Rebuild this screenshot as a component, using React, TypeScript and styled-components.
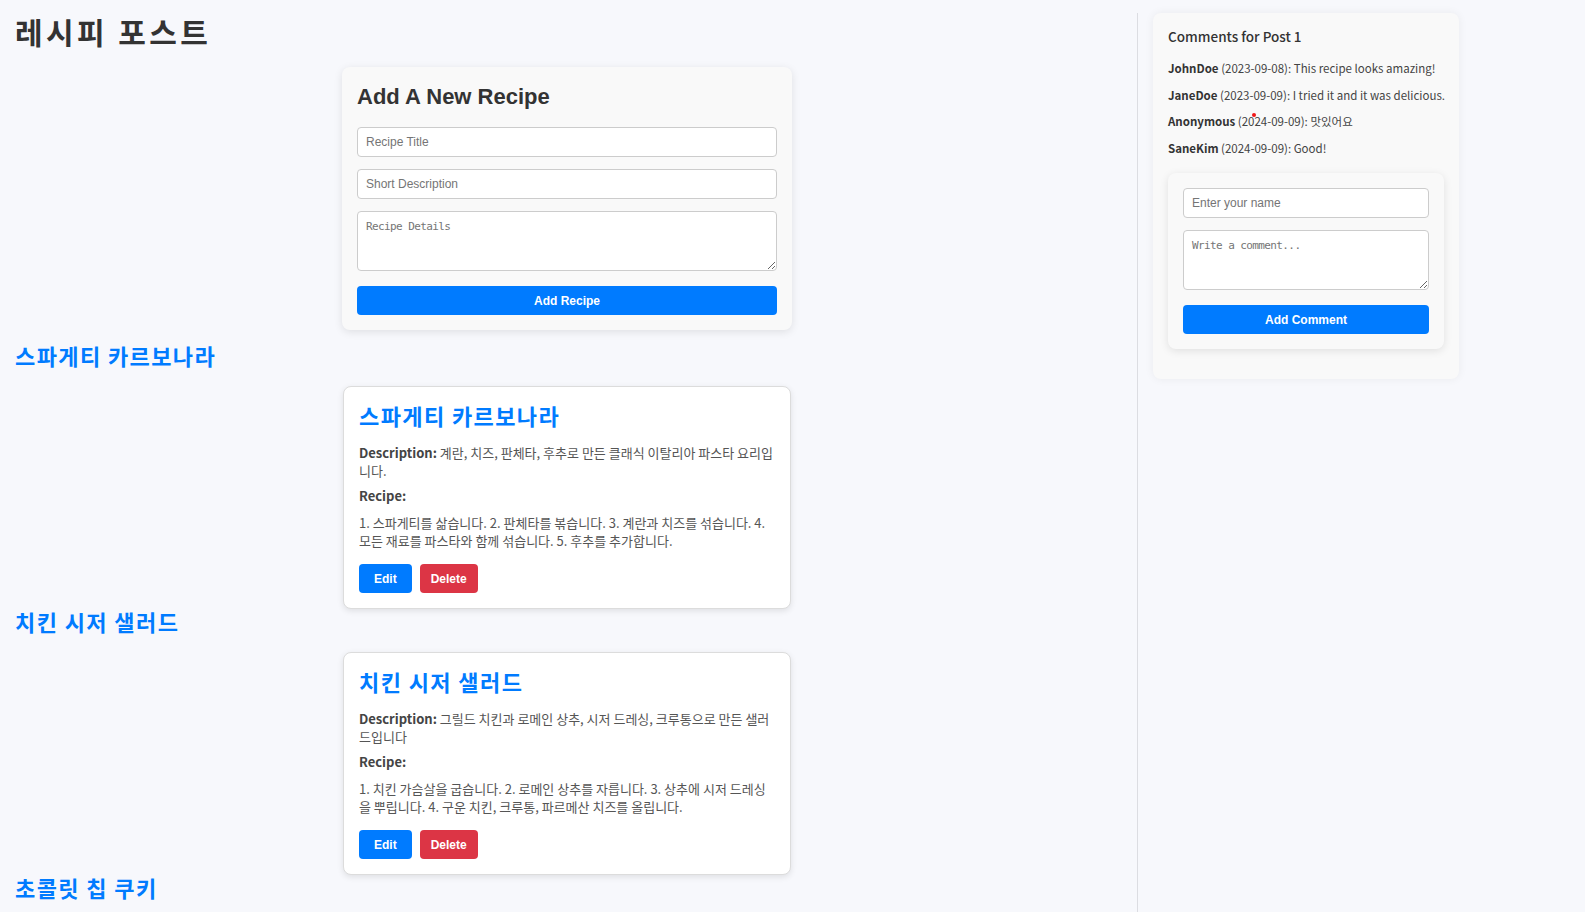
import React from "react";
import styled, { createGlobalStyle } from "styled-components";

const GlobalStyle = createGlobalStyle`
  html, body {
    margin: 0;
    padding: 0;
    background: #f7f8fc;
    font-family: "Noto Sans CJK KR", "Noto Sans", sans-serif;
    color: #333;
  }
  * { box-sizing: border-box; }
`;

const Page = styled.div`
  display: flex;
  align-items: stretch;
  min-height: 100vh;
  padding: 13px 0 0 15px;
`;

const Main = styled.main`
  flex: 1;
  min-width: 0;
  margin-right: 18px;
`;

const Sidebar = styled.aside`
  width: 448px;
  flex: none;
  border-left: 1px solid #dcdde2;
  padding-left: 15px;
`;

const PageTitle = styled.h1`
  margin: 0 0 18px;
  font-family: "Noto Sans CJK KR", sans-serif;
  font-size: 30px;
  line-height: 36px;
  letter-spacing: 3.4px;
  font-weight: 700;
  color: #333;
`;

const FormCard = styled.section`
  width: 450px;
  margin: 0 auto 13px;
  padding: 15px;
  background: #f9f9f9;
  border-radius: 8px;
  box-shadow: 0 2px 8px rgba(0, 0, 0, 0.1);
`;

const FormTitle = styled.h2`
  margin: 2px 0 18px;
  font-family: "Liberation Sans", Arial, sans-serif;
  font-size: 22px;
  line-height: 25px;
  font-weight: 700;
  color: #333;
`;

const Form = styled.div`
  display: flex;
  flex-direction: column;
  gap: 12px;
`;

const TextInput = styled.input`
  display: block;
  width: 100%;
  height: 30px;
  padding: 0 8px;
  border: 1px solid #ccc;
  border-radius: 4px;
  background: #fff;
  font-family: "Liberation Sans", Arial, sans-serif;
  font-size: 12px;
  color: #333;
  &::placeholder { color: #757575; }
`;

const TextArea = styled.textarea`
  display: block;
  width: 100%;
  height: 60px;
  padding: 8px;
  border: 1px solid #ccc;
  border-radius: 4px;
  background: #fff;
  font-family: "DejaVu Sans Mono", monospace;
  font-size: 11px;
  letter-spacing: -0.6px;
  color: #333;
  &::placeholder { color: #757575; }
`;

const Button = styled.button<{ $variant?: "primary" | "danger"; $full?: boolean; $px?: number }>`
  display: inline-flex;
  align-items: center;
  justify-content: center;
  height: 29px;
  width: ${(p) => (p.$full ? "100%" : "auto")};
  padding: 0 ${(p) => p.$px ?? 12}px;
  border: none;
  border-radius: 4px;
  background: ${(p) => (p.$variant === "danger" ? "#dc3545" : "#007bff")};
  color: #fff;
  font-family: "Liberation Sans", Arial, sans-serif;
  font-size: 12px;
  font-weight: 700;
  cursor: pointer;
`;

const SubmitButton = styled(Button)`
  margin-top: 3px;
`;

const RecipeLink = styled.h2`
  margin: 0;
  font-family: "Noto Sans CJK KR", sans-serif;
  font-size: 22px;
  line-height: 24px;
  letter-spacing: 1.4px;
  font-weight: 700;
  color: #007bff;
`;

const RecipeCard = styled.article`
  width: 448px;
  margin: 19px auto 0;
  padding: 15px;
  background: #fff;
  border: 1px solid #dcdcdc;
  border-radius: 8px;
  box-shadow: 0 2px 6px rgba(0, 0, 0, 0.1);
`;

const CardTitle = styled(RecipeLink)`
  margin: 1px 0 17px;
`;

const CardText = styled.p<{ $mb: number }>`
  margin: 0 0 ${(p) => p.$mb}px;
  font-size: 13px;
  line-height: 18px;
  color: #555;
  strong { color: #444; font-weight: 700; }
`;

const ButtonRow = styled.div`
  display: flex;
  gap: 8px;
`;

const CommentsCard = styled.section`
  width: 306px;
  padding: 15px;
  background: #f9f9f9;
  border-radius: 8px;
  box-shadow: 0 0 10px rgba(0, 0, 0, 0.06);
`;

const CommentsTitle = styled.h3`
  margin: 0 0 14px;
  font-size: 13.5px;
  line-height: 17px;
  font-weight: 500;
  color: #333;
`;

const CommentList = styled.div`
  display: flex;
  flex-direction: column;
  gap: 8.5px;
`;

const Comment = styled.p`
  position: relative;
  margin: 0;
  font-size: 11.5px;
  line-height: 18px;
  color: #444;
  white-space: nowrap;
  strong { color: #333; font-weight: 700; }
`;

const CursorDot = styled.span`
  position: absolute;
  left: 84px;
  top: 1px;
  width: 4px;
  height: 4px;
  border-radius: 50%;
  background: #f01818;
`;

const CommentFormCard = styled.div`
  margin: 16.5px 0 15px;
  padding: 15px;
  background: #f9f9f9;
  border-radius: 8px;
  box-shadow: 0 2px 8px rgba(0, 0, 0, 0.1);
`;

const recipes = [
  {
    title: "스파게티 카르보나라",
    description: "계란, 치즈, 판체타, 후추로 만든 클래식 이탈리아 파스타 요리입니다.",
    steps:
      "1. 스파게티를 삶습니다. 2. 판체타를 볶습니다. 3. 계란과 치즈를 섞습니다. 4. 모든 재료를 파스타와 함께 섞습니다. 5. 후추를 추가합니다.",
  },
  {
    title: "치킨 시저 샐러드",
    description: "그릴드 치킨과 로메인 상추, 시저 드레싱, 크루통으로 만든 샐러드입니다",
    steps:
      "1. 치킨 가슴살을 굽습니다. 2. 로메인 상추를 자릅니다. 3. 상추에 시저 드레싱을 뿌립니다. 4. 구운 치킨, 크루통, 파르메산 치즈를 올립니다.",
  },
  {
    title: "초콜릿 칩 쿠키",
    description: "버터와 초콜릿 칩으로 만든 바삭하고 쫄깃한 쿠키입니다.",
    steps:
      "1. 버터와 설탕을 섞습니다. 2. 계란과 바닐라를 넣습니다. 3. 밀가루를 섞습니다. 4. 초콜릿 칩을 넣고 굽습니다.",
  },
];

const comments = [
  { name: "JohnDoe", date: "2023-09-08", text: "This recipe looks amazing!" },
  { name: "JaneDoe", date: "2023-09-09", text: "I tried it and it was delicious." },
  { name: "Anonymous", date: "2024-09-09", text: "맛있어요", dot: true },
  { name: "SaneKim", date: "2024-09-09", text: "Good!" },
];

export default function App() {
  return (
    <>
      <GlobalStyle />
      <Page>
        <Main>
          <PageTitle>레시피 포스트</PageTitle>
          <FormCard>
            <FormTitle>Add A New Recipe</FormTitle>
            <Form>
              <TextInput placeholder="Recipe Title" />
              <TextInput placeholder="Short Description" />
              <TextArea placeholder="Recipe Details" />
              <SubmitButton $full>Add Recipe</SubmitButton>
            </Form>
          </FormCard>
          {recipes.map((r) => (
            <React.Fragment key={r.title}>
              <RecipeLink>{r.title}</RecipeLink>
              <RecipeCard>
                <CardTitle>{r.title}</CardTitle>
                <CardText $mb={7}>
                  <strong>Description:</strong> {r.description}
                </CardText>
                <CardText $mb={9}>
                  <strong>Recipe:</strong>
                </CardText>
                <CardText $mb={14}>{r.steps}</CardText>
                <ButtonRow>
                  <Button $px={15}>Edit</Button>
                  <Button $variant="danger" $px={11}>Delete</Button>
                </ButtonRow>
              </RecipeCard>
            </React.Fragment>
          ))}
        </Main>
        <Sidebar>
          <CommentsCard>
            <CommentsTitle>Comments for Post 1</CommentsTitle>
            <CommentList>
              {comments.map((c) => (
                <Comment key={c.name}>
                  <strong>{c.name}</strong> ({c.date}): {c.text}
                  {c.dot && <CursorDot />}
                </Comment>
              ))}
            </CommentList>
            <CommentFormCard>
              <Form>
                <TextInput placeholder="Enter your name" />
                <TextArea placeholder="Write a comment..." />
                <SubmitButton $full>Add Comment</SubmitButton>
              </Form>
            </CommentFormCard>
          </CommentsCard>
        </Sidebar>
      </Page>
    </>
  );
}
